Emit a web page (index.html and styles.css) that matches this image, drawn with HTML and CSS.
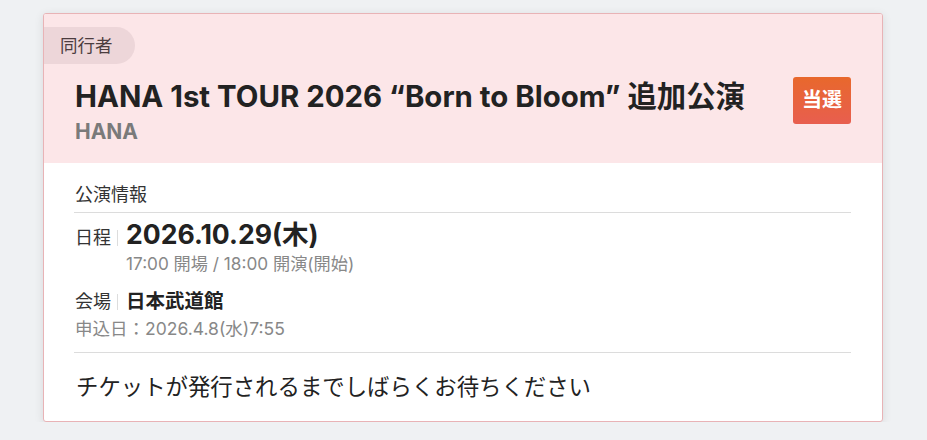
FILE: index.html
```html
<!DOCTYPE html>
<html lang="ja">
<head>
<meta charset="utf-8">
<link rel="stylesheet" href="styles.css">
</head>
<body>
<div class="card">
  <div class="card-head">
    <div class="pill">同行者</div>
    <div class="head-row">
      <div class="head-text">
        <div class="title">HANA 1st TOUR 2026 “Born to Bloom” 追加公演</div>
        <div class="artist">HANA</div>
      </div>
      <div class="badge">当選</div>
    </div>
  </div>
  <div class="card-body">
    <div class="section-title">公演情報</div>
    <div class="info">
      <div class="row row-date">
        <span class="label">日程</span>
        <span class="date">2026.10.29(木)</span>
      </div>
      <div class="time">17:00 開場 / 18:00 開演(開始)</div>
      <div class="row row-venue">
        <span class="label">会場</span>
        <span class="venue">日本武道館</span>
      </div>
      <div class="applied">申込日：2026.4.8(水)7:55</div>
    </div>
    <div class="notice">チケットが発行されるまでしばらくお待ちください</div>
  </div>
</div>
</body>
</html>
```
FILE: styles.css
```css
* { box-sizing: border-box; }
html, body { margin: 0; padding: 0; }
body {
  background: #eff1f3;
  font-family: "Inter", "Noto Sans CJK JP", sans-serif;
  color: #222;
  padding: 13px 0 0 43px;
}
.card {
  width: 840px;
  height: 409px;
  border: 1px solid #e8b3b6;
  border-radius: 3px;
  background: #fff;
  box-shadow: 0 2px 10px rgba(0, 0, 0, 0.10);
  overflow: hidden;
}
.card-head {
  background: #fce6e8;
  padding: 13px 31px 18px 0;
  height: 149px;
}
.pill {
  display: inline-block;
  height: 37px;
  line-height: 37px;
  padding: 0 22px 0 16px;
  background: #edd6d9;
  color: #4b3d3f;
  font-size: 17.5px;
  border-radius: 0 19px 19px 0;
}
.head-row {
  display: flex;
  justify-content: space-between;
  align-items: flex-start;
  margin-top: 15px;
  padding-left: 31px;
}
.title {
  font-size: 29.4px;
  font-weight: 700;
  line-height: 36px;
  color: #222;
}
.artist {
  margin-top: 5px;
  font-size: 21px;
  font-weight: 700;
  line-height: 24px;
  color: #7a7a7a;
}
.badge {
  margin-top: -2px;
  width: 58px;
  height: 47px;
  line-height: 47px;
  text-align: center;
  color: #fff;
  font-size: 20px;
  font-weight: 700;
  border-radius: 3px;
  background: linear-gradient(#e8682c, #e85e4f);
}
.card-body {
  padding: 0 31px 0 30px;
}
.section-title {
  padding: 20px 0 5px 1px;
  font-size: 18px;
  line-height: 24px;
  border-bottom: 1px solid #dcdcdc;
  color: #333;
}
.info {
  padding: 6px 0 12px 1px;
  border-bottom: 1px solid #dcdcdc;
}
.row {
  display: flex;
  align-items: baseline;
}
.label {
  display: inline-block;
  font-size: 18px;
  line-height: 16px;
  color: #333;
  padding-right: 6px;
  margin-right: 8px;
  border-right: 1px solid #ddd;
}
.date {
  font-size: 26.6px;
  font-weight: 700;
  line-height: 30px;
  color: #222;
}
.time {
  margin: 4px 0 0 51px;
  font-size: 17.2px;
  line-height: 22px;
  color: #888;
}
.row-venue {
  margin-top: 13px;
}
.venue {
  font-size: 19.5px;
  font-weight: 700;
  line-height: 26px;
  color: #222;
}
.applied {
  margin-top: 4px;
  font-size: 17.5px;
  line-height: 22px;
  color: #888;
}
.notice {
  padding: 19px 0 0 2px;
  font-size: 22.4px;
  line-height: 30px;
  color: #222;
}
```
